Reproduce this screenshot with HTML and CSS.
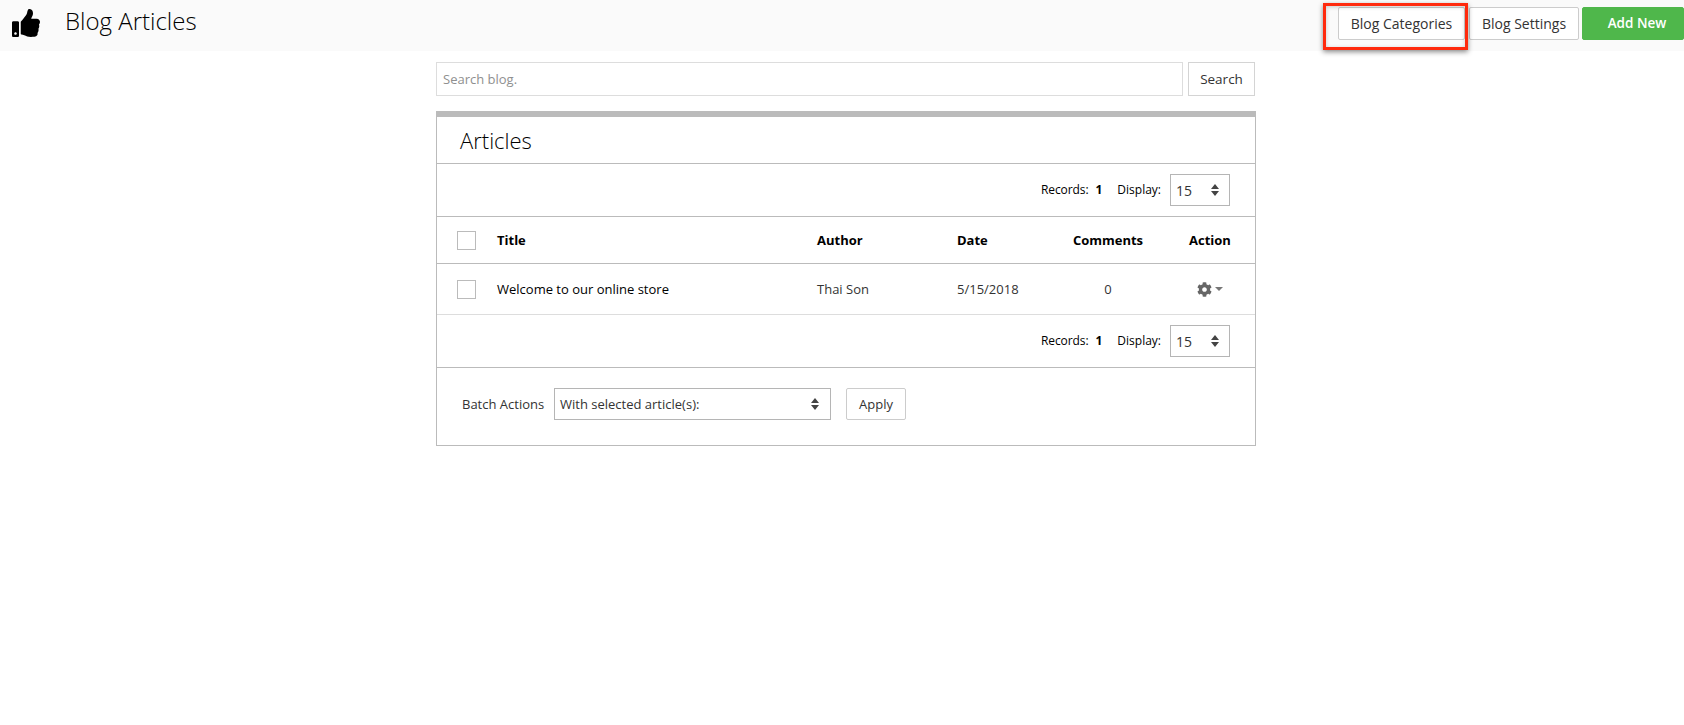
FILE: index.html
```html
<!DOCTYPE html>
<html lang="en">
<head>
<meta charset="utf-8">
<title>Blog Articles</title>
<link rel="stylesheet" href="styles.css">
</head>
<body>
<header class="topbar">
  <svg class="logo" viewBox="0 0 512 512"><path d="M104 224H24c-13.255 0-24 10.745-24 24v240c0 13.255 10.745 24 24 24h80c13.255 0 24-10.745 24-24V248c0-13.255-10.745-24-24-24zM64 472c-13.255 0-24-10.745-24-24s10.745-24 24-24 24 10.745 24 24-10.745 24-24 24zM384 81.452c0 42.416-25.97 66.208-33.277 94.548h101.723c33.397 0 59.397 27.746 59.553 58.098.084 17.938-7.546 37.249-19.439 49.197l-.11.11c9.836 23.337 8.237 56.037-9.308 79.469 8.681 25.895-.069 57.704-16.382 74.757 4.298 17.598 2.244 32.575-6.148 44.632C440.202 511.587 389.616 512 346.839 512l-2.845-.001c-48.287-.017-87.806-17.598-119.56-31.725-15.957-7.099-36.821-15.887-52.651-16.178-6.54-.12-11.783-5.457-11.783-11.998v-213.77c0-3.2 1.282-6.271 3.558-8.521 39.614-39.144 56.648-80.587 89.117-113.111 14.804-14.832 20.188-37.236 25.393-58.902C282.515 39.293 291.817 0 312 0c24 0 72 8 72 81.452z"/></svg>
  <h1 class="page-title">Blog Articles</h1>
  <nav class="top-actions">
    <a class="btn btn-cat">Blog Categories</a>
    <a class="btn btn-set">Blog Settings</a>
    <a class="btn btn-add">Add New</a>
  </nav>
  <div class="annotation"></div>
</header>

<main class="content">
  <form class="search">
    <input class="search-input" type="text" placeholder="Search blog.">
    <button class="btn search-btn" type="button">Search</button>
  </form>

  <section class="panel">
    <h2 class="panel-title">Articles</h2>

    <div class="pager pager-top">
      <span class="rec">Records:</span><b class="rec-n">1</b><span class="disp">Display:</span>
      <div class="select select-sm"><span class="sel-val">15</span>
        <svg class="updown" viewBox="0 0 8 12"><path d="M4 0l4 5H0zM4 12l4-5H0z"/></svg>
      </div>
    </div>

    <div class="row row-head">
      <span class="check"></span>
      <span>Title</span>
      <span>Author</span>
      <span>Date</span>
      <span class="center">Comments</span>
      <span class="action">Action</span>
    </div>

    <div class="row row-body">
      <span class="check"></span>
      <span class="t-title">Welcome to our online store</span>
      <span class="muted">Thai Son</span>
      <span class="muted">5/15/2018</span>
      <span class="center muted">0</span>
      <span class="action-icon">
        <svg class="gear" viewBox="0 0 512 512"><path d="M487.4 315.7l-42.6-24.6c4.3-23.2 4.3-47 0-70.2l42.6-24.6c4.9-2.8 7.1-8.6 5.5-14-11.1-35.6-30-67.8-54.7-94.6-3.8-4.1-10-5.1-14.8-2.3L380.8 110c-17.9-15.4-38.5-27.3-60.8-35.1V25.8c0-5.6-3.9-10.5-9.4-11.7-36.7-8.2-74.3-7.8-109.2 0-5.5 1.2-9.4 6.1-9.4 11.7V75c-22.2 7.9-42.8 19.8-60.8 35.1L88.7 85.5c-4.9-2.8-11-1.9-14.8 2.3-24.7 26.7-43.6 58.9-54.7 94.6-1.7 5.4.6 11.2 5.5 14L67.3 221c-4.3 23.2-4.3 47 0 70.2l-42.6 24.6c-4.9 2.8-7.1 8.6-5.5 14 11.1 35.6 30 67.8 54.7 94.6 3.8 4.1 10 5.1 14.8 2.3l42.6-24.6c17.9 15.4 38.5 27.3 60.8 35.1v49.2c0 5.6 3.9 10.5 9.4 11.7 36.7 8.2 74.3 7.8 109.2 0 5.5-1.2 9.4-6.1 9.4-11.7v-49.2c22.2-7.9 42.8-19.8 60.8-35.1l42.6 24.6c4.9 2.8 11 1.9 14.8-2.3 24.7-26.7 43.6-58.9 54.7-94.6 1.5-5.5-.7-11.3-5.6-14.1zM256 336c-44.1 0-80-35.9-80-80s35.9-80 80-80 80 35.9 80 80-35.9 80-80 80z"/></svg>
        <i class="caret"></i>
      </span>
    </div>

    <div class="pager pager-bottom">
      <span class="rec">Records:</span><b class="rec-n">1</b><span class="disp">Display:</span>
      <div class="select select-sm"><span class="sel-val">15</span>
        <svg class="updown" viewBox="0 0 8 12"><path d="M4 0l4 5H0zM4 12l4-5H0z"/></svg>
      </div>
    </div>

    <div class="batch">
      <span class="batch-label">Batch Actions</span>
      <div class="select select-lg"><span>With selected article(s):</span>
        <svg class="updown" viewBox="0 0 8 12"><path d="M4 0l4 5H0zM4 12l4-5H0z"/></svg>
      </div>
      <button class="btn apply" type="button">Apply</button>
    </div>
  </section>
</main>
</body>
</html>
```
FILE: styles.css
```css
* { box-sizing: border-box; }
html, body { margin: 0; padding: 0; }
body {
  background: #fff;
  color: #000;
  font-family: "Open Sans", "Liberation Sans", sans-serif;
  font-size: 14px;
  height: 725px;
  overflow: hidden;
}

/* Top bar */
.topbar {
  position: relative;
  display: flex;
  align-items: flex-start;
  height: 51px;
  background: #fafafa;
  padding-left: 11px;
}
.logo { width: 30px; height: 28px; margin-top: 9px; fill: #000; flex: none; }
.page-title {
  margin: 4px 0 0 24px;
  font-size: 24px;
  line-height: 33px;
  font-weight: 300;
  color: #000;
}
.top-actions { display: flex; margin-left: auto; margin-top: 7px; }
.btn {
  display: flex;
  align-items: center;
  justify-content: center;
  height: 33px;
  background: #fff;
  border: 1px solid #ccc;
  border-radius: 2px;
  color: #333;
  font: 14px/1 "Open Sans", "Liberation Sans", sans-serif;
}
.btn-cat { width: 127px; margin-right: 4px; }
.btn-set { width: 110px; margin-right: 3px; }
.btn-add {
  width: 102px;
  padding-left: 8px;
  background: #4fb74b;
  border-color: #4fb74b;
  color: #fff;
  font-size: 13.5px;
  font-weight: 600;
}
.annotation {
  position: absolute;
  left: 1323px;
  top: 3px;
  width: 145px;
  height: 47px;
  border: 3px solid #ff2a0d;
  box-shadow: 0 2px 5px rgba(0, 0, 0, .45), inset 0 1px 4px rgba(0, 0, 0, .2);
}

/* Content */
.content { width: 820px; margin-left: 436px; }
.search { display: flex; gap: 5px; margin: 11px 0 15px; width: 819px; }
.search-input {
  flex: 1;
  height: 34px;
  border: 1px solid #ddd;
  padding: 0 6px;
  font: 13px "Open Sans", "Liberation Sans", sans-serif;
  outline: none;
}
.search-input::placeholder { color: #8f8f8f; opacity: 1; }
.search-btn { width: 67px; height: 34px; padding-top: 2px; border-color: #d4d4d4; border-radius: 0; font-size: 13.5px; }

.panel {
  border: 1px solid #bbb;
  border-top: 6px solid #bbb;
  height: 335px;
}
.panel-title {
  margin: 0;
  height: 47px;
  padding: 8px 0 0 23px;
  font-size: 22px;
  line-height: 30px;
  font-weight: 300;
  border-bottom: 1px solid #bbb;
}
.pager {
  display: flex;
  align-items: center;
  justify-content: flex-end;
  padding-right: 25px;
  font-size: 12px;
}
.pager-top { height: 53px; border-bottom: 1px solid #bbb; }
.pager-bottom { height: 53px; border-bottom: 1px solid #bbb; }
.rec, .rec-n, .disp { padding-bottom: 2px; }
.rec { letter-spacing: -.1px; }
.rec-n { margin-left: 7px; }
.disp { margin-left: 15px; margin-right: 9px; }

.select {
  position: relative;
  display: flex;
  align-items: center;
  height: 32px;
  background: #fff;
  border: 1px solid #b5b5b5;
  padding-left: 5px;
  color: #333;
}
.select-sm { width: 60px; font-size: 14px; }
.select-lg { width: 277px; font-size: 13px; }
.updown { position: absolute; top: 9px; width: 8px; height: 12px; fill: #444; }
.select-sm .updown { right: 10px; }
.select-lg .updown { right: 11px; }

.row {
  display: grid;
  grid-template-columns: 40px 320px 140px 101px 100px 1fr;
  align-items: center;
  padding-left: 20px;
  font-size: 13px;
}
.row-head { height: 47px; font-weight: 700; border-bottom: 1px solid #bbb; }
.row-body { height: 51px; border-bottom: 1px solid #ddd; }
.check { width: 19px; height: 19px; border: 1px solid #bbb; background: #fff; }
.center { text-align: center; }
.action { padding-left: 31px; }
.action-icon { display: flex; align-items: center; padding-left: 39px; }
.t-title { color: #000; }
.muted { color: #333; }
.gear { width: 15px; height: 15px; fill: #666; }
.caret {
  margin-left: 3px;
  border-left: 4px solid transparent;
  border-right: 4px solid transparent;
  border-top: 4px solid #777;
}

.batch {
  display: flex;
  align-items: flex-start;
  padding: 20px 0 0 25px;
  font-size: 13px;
}
.batch-label { width: 92px; color: #333; line-height: 32px; }
.apply { width: 60px; height: 32px; margin-left: 15px; font-size: 13px; border-color: #ccc; }
```
